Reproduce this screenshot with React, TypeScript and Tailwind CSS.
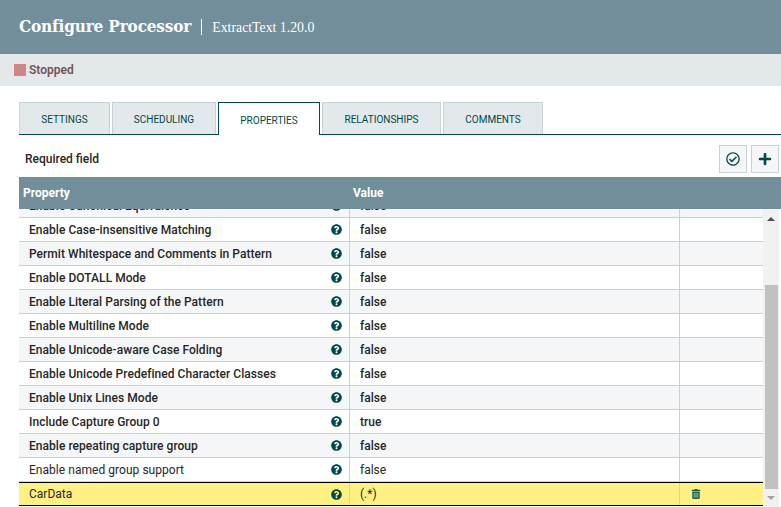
import { FaQuestionCircle, FaRegCheckCircle, FaPlus, FaTrashAlt } from "react-icons/fa";

const tabs = ["SETTINGS", "SCHEDULING", "PROPERTIES", "RELATIONSHIPS", "COMMENTS"];
const tabWidths = ["w-[91px]", "w-[104px]", "w-[102px]", "w-[119px]", "w-[100px]"];

const rows = [
  { name: "Enable Canonical Equivalence", value: "false", bold: true },
  { name: "Enable Case-insensitive Matching", value: "false", bold: true },
  { name: "Permit Whitespace and Comments in Pattern", value: "false", bold: true },
  { name: "Enable DOTALL Mode", value: "false", bold: true },
  { name: "Enable Literal Parsing of the Pattern", value: "false", bold: true },
  { name: "Enable Multiline Mode", value: "false", bold: true },
  { name: "Enable Unicode-aware Case Folding", value: "false", bold: true },
  { name: "Enable Unicode Predefined Character Classes", value: "false", bold: true },
  { name: "Enable Unix Lines Mode", value: "false", bold: true },
  { name: "Include Capture Group 0", value: "true", bold: true },
  { name: "Enable repeating capture group", value: "false", bold: true },
  { name: "Enable named group support", value: "false", bold: false },
];

function Row({ name, value, bold, odd }: { name: string; value: string; bold: boolean; odd: boolean }) {
  return (
    <div
      className={`flex h-6 border-b border-[#c7d2d7] text-[12px] text-[#262626] ${odd ? "bg-[#f4f6f7]" : "bg-white"} ${bold ? "font-medium" : ""}`}
    >
      <div className="flex w-[330px] items-center justify-between pl-[10px] pr-[7px]">
        <span className="truncate tracking-[0.04px]">{name}</span>
        <FaQuestionCircle className="shrink-0 text-[11px] text-[#004849]" />
      </div>
      <div className="flex w-[330px] items-center border-l border-[#c7d2d7] pl-[10px]">{value}</div>
      <div className="flex-1 border-l border-[#c7d2d7]" />
    </div>
  );
}

export default function App() {
  return (
    <div className="h-[507px] w-[781px] overflow-hidden bg-white font-['Roboto',sans-serif]">
      <div className="flex h-[54px] items-center bg-[#728e9b] pl-[19px] text-white">
        <span className="font-['DejaVu_Serif',serif] text-[17px] font-bold tracking-[-0.15px] [font-stretch:condensed]">
          Configure Processor
        </span>
        <span className="ml-[10px] h-4 w-px bg-white" />
        <span className="ml-[10px] pt-[3px] font-['Liberation_Serif',serif] text-[13.8px]">ExtractText 1.20.0</span>
      </div>
      <div className="flex h-8 items-center bg-[#e3e8eb] pl-[14px]">
        <span className="h-3 w-3 bg-[#d18686]" />
        <span className="ml-[3px] text-[12px] font-semibold text-[#775351]">Stopped</span>
      </div>

      <div className="ml-[19px] mt-4 flex h-[33px] gap-[2px] border-b border-[#004849]">
        {tabs.map((t, i) => (
          <div
            key={t}
            className={`flex items-center justify-center pt-[2px] text-[10px] ${tabWidths[i]} ${
              t === "PROPERTIES"
                ? "relative h-[33px] border border-b-0 border-[#004849] bg-white text-[#004849]"
                : "border border-b-0 border-[#c7d2d7] bg-[#e3e8eb] text-[#004849]"
            }`}
          >
            {t}
          </div>
        ))}
      </div>

      <div className="ml-[19px] mt-[10px] flex h-[28px] items-center justify-between pr-[2px]">
        <span className="pl-[6px] text-[12px] font-medium text-[#262626]">Required field</span>
        <div className="flex gap-1">
          <div className="flex h-[28px] w-[28px] items-center justify-center border border-[#c7d2d7] bg-[#f4f6f7]">
            <FaRegCheckCircle className="text-[14px] text-[#004849]" />
          </div>
          <div className="flex h-[28px] w-[28px] items-center justify-center border border-[#c7d2d7] bg-[#f4f6f7]">
            <FaPlus className="text-[14px] text-[#004849]" />
          </div>
        </div>
      </div>

      <div className="ml-[19px] mt-1">
        <div className="flex h-8 items-center bg-[#728e9b] text-[12px] font-bold text-white">
          <span className="w-[334px] pl-1">Property</span>
          <span>Value</span>
        </div>
        <div className="relative h-[298px] overflow-hidden">
          <div className="-mt-[15px] mr-[18px]">
            {rows.map((r, i) => (
              <Row key={r.name} {...r} odd={i % 2 === 0} />
            ))}
            <div className="flex h-6 border-y border-black bg-[#fff083] text-[12px] text-[#262626]">
              <div className="flex w-[330px] items-center justify-between pl-[10px] pr-[7px]">
                <span>CarData</span>
                <FaQuestionCircle className="text-[11px] text-[#004849]" />
              </div>
              <div className="flex w-[330px] items-center border-l border-[#c7d2d7] pl-[10px]">(.*)</div>
              <div className="flex flex-1 items-center border-l border-[#c7d2d7] pl-[11px]">
                <FaTrashAlt className="text-[10px] text-[#1d5f55]" />
              </div>
            </div>
          </div>
          <div className="absolute bottom-0 right-[2px] top-0 flex w-4 flex-col items-center bg-[#f1f1f1]">
            <div className="mt-[8px] h-0 w-0 border-x-[4px] border-b-[4px] border-x-transparent border-b-[#505050]" />
            <div className="mt-[64px] h-[204px] w-[13px] bg-[#c1c1c1]" />
            <div className="mt-[7px] h-0 w-0 border-x-[4px] border-t-[4px] border-x-transparent border-t-[#a3a3a3]" />
          </div>
        </div>
      </div>
    </div>
  );
}
